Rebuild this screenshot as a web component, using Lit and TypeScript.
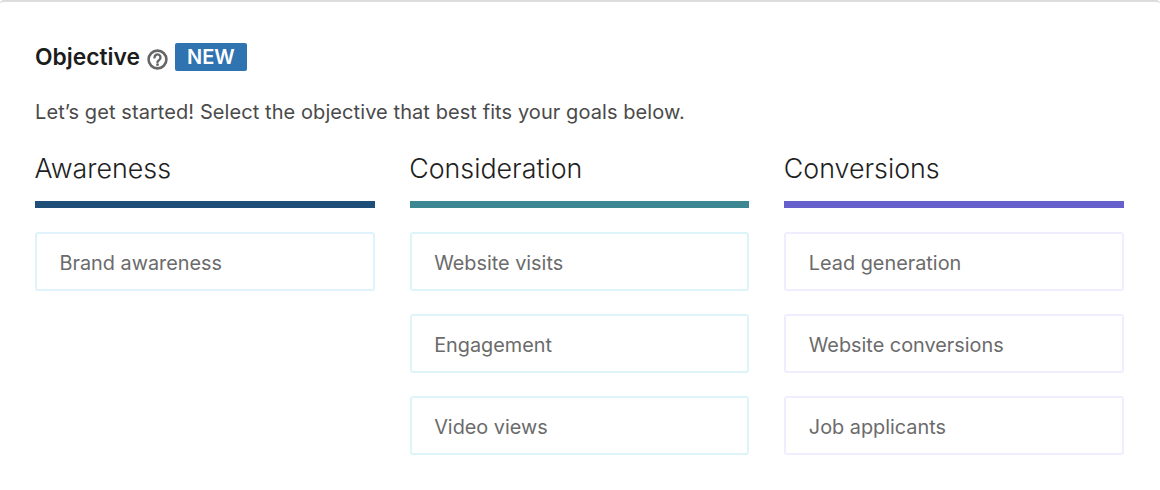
import { LitElement, html, css } from "lit";
import { customElement } from "lit/decorators.js";

const columns = [
  { title: "Awareness", cls: "aware", items: ["Brand awareness"] },
  { title: "Consideration", cls: "consider", items: ["Website visits", "Engagement", "Video views"] },
  { title: "Conversions", cls: "convert", items: ["Lead generation", "Website conversions", "Job applicants"] },
];

@customElement("app-root")
export class AppRoot extends LitElement {
  static styles = css`
    :host {
      display: block;
      width: 1160px;
      height: 490px;
      overflow: hidden;
      background: #fff;
      font-family: Inter, "Liberation Sans", sans-serif;
      box-sizing: border-box;
    }
    .card {
      box-sizing: border-box;
      height: 490px;
      border-top: 2px solid #dcdcdc;
      border-radius: 4px 4px 0 0;
      padding: 40px 36px 0 35px;
      background: #fff;
    }
    .head {
      display: flex;
      align-items: center;
      height: 30px;
    }
    h1 {
      margin: 0;
      font-size: 22.8px;
      line-height: 30px;
      font-weight: 600;
      color: #1c1c1c;
    }
    .help {
      display: block;
      margin: 5px 0 0 7px;
      width: 21px;
      height: 21px;
    }
    .badge {
      margin-left: 7px;
      width: 72px;
      height: 28px;
      display: flex;
      align-items: center;
      justify-content: center;
      background: #2f73b0;
      border-radius: 2px;
      color: #fff;
      font-size: 20px;
      font-weight: 600;
    }
    p {
      margin: 25px 0 0;
      font-size: 20px;
      letter-spacing: 0.08px;
      line-height: 30px;
      color: #4a4a4a;
    }
    .cols {
      margin-top: 22px;
      display: grid;
      grid-template-columns: repeat(3, 1fr);
      column-gap: 35px;
    }
    h2 {
      margin: 0 0 0 -0.5px;
      font-size: 26.8px;
      line-height: 38px;
      font-weight: 300;
      color: #1f1f1f;
    }
    .bar {
      margin-top: 14px;
      height: 7px;
    }
    .list {
      margin-top: 24px;
      display: flex;
      flex-direction: column;
      gap: 23px;
    }
    .item {
      box-sizing: border-box;
      height: 59px;
      border: 2px solid;
      border-radius: 3px;
      padding: 2px 0 0 22.5px;
      display: flex;
      align-items: center;
      font-size: 19.85px;
      color: #6b6b6b;
    }
    .aware .bar { background: #1f4e79; }
    .consider .bar { background: #3c8792; }
    .convert .bar { background: #6560cc; }
    .aware .item { border-color: #e0f3fd; }
    .consider .item { border-color: #ddf5f8; }
    .convert .item { border-color: #efeefe; }
  `;

  render() {
    return html`
      <div class="card">
        <div class="head">
          <h1>Objective</h1>
          <svg class="help" viewBox="0 0 21 21" fill="none" aria-hidden="true">
            <circle cx="10.5" cy="10.5" r="8.9" stroke="#666" stroke-width="2.6"></circle>
            <path d="M7.5 8.4a3 3 0 1 1 4.7 2.5c-1.1.7-1.7 1.2-1.7 2.2" stroke="#666" stroke-width="2.4" stroke-linecap="round"></path>
            <circle cx="10.5" cy="15.7" r="1.4" fill="#666"></circle>
          </svg>
          <span class="badge">NEW</span>
        </div>
        <p>Let’s get started! Select the objective that best fits your goals below.</p>
        <div class="cols">
          ${columns.map(
            (c) => html`
              <section class=${c.cls}>
                <h2>${c.title}</h2>
                <div class="bar"></div>
                <div class="list">
                  ${c.items.map((i) => html`<div class="item">${i}</div>`)}
                </div>
              </section>
            `
          )}
        </div>
      </div>
    `;
  }
}
